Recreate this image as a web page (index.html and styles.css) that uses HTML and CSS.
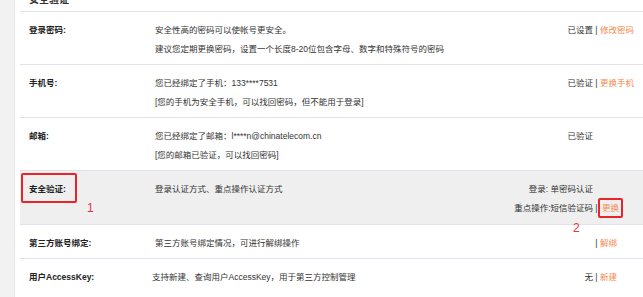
FILE: index.html
```html
<!DOCTYPE html>
<html>
<head>
    <title>安全设置</title>
    <link rel="stylesheet" href="styles.css">
</head>
<body>
    <div class="page">
        <aside class="side"></aside>
        <main class="main">
            <h2 class="title">安全验证</h2>

            <div class="row">
                <div class="label">登录密码:</div>
                <div class="desc">
                    <p>安全性高的密码可以使帐号更安全。</p>
                    <p>建议您定期更换密码，设置一个长度8-20位包含字母、数字和特殊符号的密码</p>
                </div>
                <div class="info">
                    <div class="line"><span class="state">已设置</span><span class="act"> | <a href="#">修改密码</a></span></div>
                </div>
            </div>

            <div class="row">
                <div class="label">手机号:</div>
                <div class="desc">
                    <p>您已经绑定了手机：133****7531</p>
                    <p>[您的手机为安全手机，可以找回密码，但不能用于登录]</p>
                </div>
                <div class="info">
                    <div class="line"><span class="state">已验证</span><span class="act"> | <a href="#">更换手机</a></span></div>
                </div>
            </div>

            <div class="row">
                <div class="label">邮箱:</div>
                <div class="desc">
                    <p>您已经绑定了邮箱：l****n@chinatelecom.cn</p>
                    <p>[您的邮箱已验证，可以找回密码]</p>
                </div>
                <div class="info">
                    <div class="line"><span class="state">已验证</span><span class="act"></span></div>
                </div>
            </div>

            <div class="row row-active">
                <div class="label">安全验证:</div>
                <div class="desc">
                    <p>登录认证方式、重点操作认证方式</p>
                </div>
                <div class="info">
                    <div class="line"><span class="state">登录: 单密码认证</span><span class="act"></span></div>
                    <div class="line"><span class="state">重点操作:短信验证码</span><span class="act"> | <a href="#" class="mark">更换</a></span></div>
                </div>
                <!-- annotations -->
                <div class="mark-box"></div>
                <span class="mark-num num-1">1</span>
                <span class="mark-num num-2">2</span>
            </div>

            <div class="row">
                <div class="label">第三方账号绑定:</div>
                <div class="desc">
                    <p>第三方账号绑定情况，可进行解绑操作</p>
                </div>
                <div class="info">
                    <div class="line"><span class="state"></span><span class="act"> | <a href="#">解绑</a></span></div>
                </div>
            </div>

            <div class="row row-last">
                <div class="label">用户AccessKey:</div>
                <div class="desc desc-shift">
                    <p>支持新建、查询用户AccessKey，用于第三方控制管理</p>
                </div>
                <div class="info">
                    <div class="line"><span class="state">无</span><span class="act"> | <a href="#">新建</a></span></div>
                </div>
            </div>
        </main>
    </div>
</body>
</html>
```

FILE: styles.css
```css
body {
    margin: 0;
    font-family: "Liberation Sans", "Noto Sans CJK SC", sans-serif;
    font-size: 8.5px;
    color: #333;
    background: #fff;
    overflow: hidden;
}
.page {
    display: flex;
    height: 297px;
}
.side {
    width: 14px;
    background: #f2f2f2;
    border-right: 1px solid #e6e6e6;
}
.main {
    flex: 1;
    padding-left: 5px;
}
.title {
    margin: -11px 0 0;
    padding-left: 9px;
    font-size: 10px;
    line-height: 22px;
    color: #333;
    border-bottom: 1px solid #e2e2ee;
}
.row {
    position: relative;
    display: flex;
    padding: 9px 8px 5px 9px;
    line-height: 19px;
    border-bottom: 1px solid #e2e2ee;
}
.row-active {
    background: #efefef;
    padding-bottom: 6px;
}
.row-last {
    border-bottom: none;
}
.label {
    width: 126px;
    font-weight: bold;
    color: #222;
}
.desc {
    flex: 1;
}
.desc p {
    margin: 0;
}
.desc-shift {
    margin-left: -3px;
}
.info {
    display: flex;
    flex-direction: column;
}
.line {
    display: flex;
}
.state {
    flex: 1;
    text-align: right;
}
.act {
    width: 42px;
    white-space: pre;
}
a {
    color: #f5894d;
    text-decoration: none;
}
a.mark {
    border: 2px solid #e8252b;
    border-radius: 2px;
    padding: 3px 2px;
    margin-left: -2px;
}
.mark-box {
    position: absolute;
    left: 1px;
    top: 2px;
    width: 52px;
    height: 26px;
    border: 2px solid #e8252b;
    border-radius: 2px;
}
.mark-num {
    position: absolute;
    color: #e8333a;
    font-size: 12px;
    line-height: 12px;
}
.num-1 {
    left: 67px;
    top: 31px;
}
.num-2 {
    left: 553px;
    top: 51px;
}
```
